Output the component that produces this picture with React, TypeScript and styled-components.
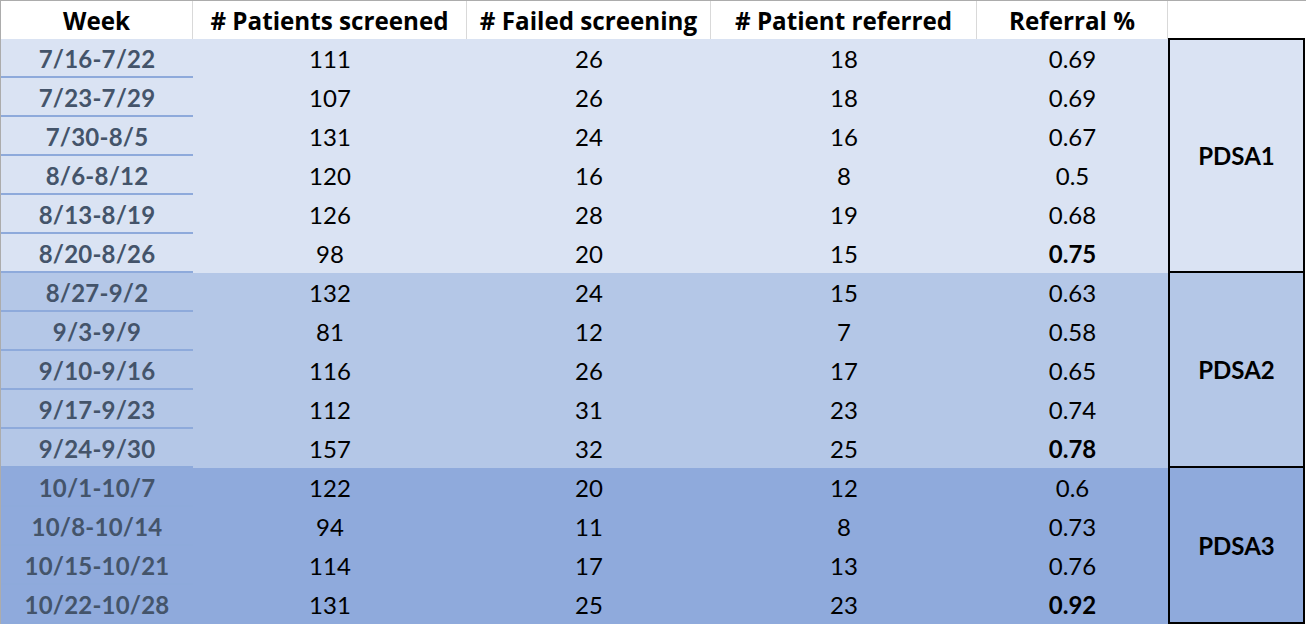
import React from "react";
import styled, { createGlobalStyle } from "styled-components";

const GlobalStyle = createGlobalStyle`
  html, body { margin: 0; padding: 0; background: #ffffff; }
  body { font-family: Lato, "Open Sans", "Liberation Sans", sans-serif; }
`;

type Band = 1 | 2 | 3;

const bandColors: Record<Band, string> = {
  1: "#dae3f3",
  2: "#b4c7e7",
  3: "#8faadc",
};

const Table = styled.div`
  display: grid;
  grid-template-columns: 192px 274px 244px 266px 191px 138px;
  grid-template-rows: 38px repeat(15, 39px);
  width: 1306px;
  height: 624px;
  border-top: 1px solid #acacac;
  border-left: 1px solid #acacac;
  box-sizing: border-box;
  overflow: hidden;
`;

const HeaderCell = styled.div<{ $last?: boolean }>`
  display: flex;
  align-items: center;
  justify-content: center;
  background: #ffffff;
  border-right: 1px solid ${(p) => (p.$last ? "#ffffff" : "#d9d9d9")};
  font-family: "Open Sans", Lato, sans-serif;
  font-size: 24.2px;
  font-weight: 700;
  color: #000000;
  letter-spacing: 0px;
  white-space: nowrap;
`;

const Cell = styled.div<{ $band: Band }>`
  display: flex;
  align-items: center;
  justify-content: center;
  background: ${(p) => bandColors[p.$band]};
  font-size: 24px;
  color: #000000;
  white-space: nowrap;
  padding-top: 0px;
  box-sizing: border-box;
`;

const WeekCell = styled(Cell)`
  font-weight: 700;
  color: #44546a;
  border-bottom: 2px solid #8eaadb;
  padding-top: 2px;
  letter-spacing: 0.2px;
`;

const ValueCell = styled(Cell)<{ $bold?: boolean }>`
  font-weight: ${(p) => (p.$bold ? 700 : 400)};
`;

const PhaseCell = styled.div<{ $band: Band; $rows: number; $first?: boolean }>`
  grid-column: 6;
  grid-row: span ${(p) => p.$rows};
  display: flex;
  align-items: center;
  justify-content: center;
  background: ${(p) => bandColors[p.$band]};
  border: 2px solid #000000;
  border-top-width: ${(p) => (p.$first ? 2 : 0)}px;
  margin-right: 1px;
  margin-top: ${(p) => (p.$first ? -1 : 0)}px;
  font-size: 24px;
  font-weight: 700;
  color: #000000;
  box-sizing: border-box;
`;

type Row = { week: string; screened: number; failed: number; referred: number; pct: string };

const groups: { label: string; band: Band; rows: Row[] }[] = [
  {
    label: "PDSA1",
    band: 1,
    rows: [
      { week: "7/16-7/22", screened: 111, failed: 26, referred: 18, pct: "0.69" },
      { week: "7/23-7/29", screened: 107, failed: 26, referred: 18, pct: "0.69" },
      { week: "7/30-8/5", screened: 131, failed: 24, referred: 16, pct: "0.67" },
      { week: "8/6-8/12", screened: 120, failed: 16, referred: 8, pct: "0.5" },
      { week: "8/13-8/19", screened: 126, failed: 28, referred: 19, pct: "0.68" },
      { week: "8/20-8/26", screened: 98, failed: 20, referred: 15, pct: "0.75" },
    ],
  },
  {
    label: "PDSA2",
    band: 2,
    rows: [
      { week: "8/27-9/2", screened: 132, failed: 24, referred: 15, pct: "0.63" },
      { week: "9/3-9/9", screened: 81, failed: 12, referred: 7, pct: "0.58" },
      { week: "9/10-9/16", screened: 116, failed: 26, referred: 17, pct: "0.65" },
      { week: "9/17-9/23", screened: 112, failed: 31, referred: 23, pct: "0.74" },
      { week: "9/24-9/30", screened: 157, failed: 32, referred: 25, pct: "0.78" },
    ],
  },
  {
    label: "PDSA3",
    band: 3,
    rows: [
      { week: "10/1-10/7", screened: 122, failed: 20, referred: 12, pct: "0.6" },
      { week: "10/8-10/14", screened: 94, failed: 11, referred: 8, pct: "0.73" },
      { week: "10/15-10/21", screened: 114, failed: 17, referred: 13, pct: "0.76" },
      { week: "10/22-10/28", screened: 131, failed: 25, referred: 23, pct: "0.92" },
    ],
  },
];

export default function App() {
  return (
    <>
      <GlobalStyle />
      <Table>
        <HeaderCell>Week</HeaderCell>
        <HeaderCell># Patients screened</HeaderCell>
        <HeaderCell># Failed screening</HeaderCell>
        <HeaderCell># Patient referred</HeaderCell>
        <HeaderCell>Referral %</HeaderCell>
        <HeaderCell $last />
        {groups.map((g, gi) =>
          g.rows.map((r, ri) => (
            <React.Fragment key={r.week}>
              <WeekCell $band={g.band}>{r.week}</WeekCell>
              <ValueCell $band={g.band}>{r.screened}</ValueCell>
              <ValueCell $band={g.band}>{r.failed}</ValueCell>
              <ValueCell $band={g.band}>{r.referred}</ValueCell>
              <ValueCell $band={g.band} $bold={ri === g.rows.length - 1}>
                {r.pct}
              </ValueCell>
              {ri === 0 && (
                <PhaseCell $band={g.band} $rows={g.rows.length} $first={gi === 0}>
                  {g.label}
                </PhaseCell>
              )}
            </React.Fragment>
          ))
        )}
      </Table>
    </>
  );
}
